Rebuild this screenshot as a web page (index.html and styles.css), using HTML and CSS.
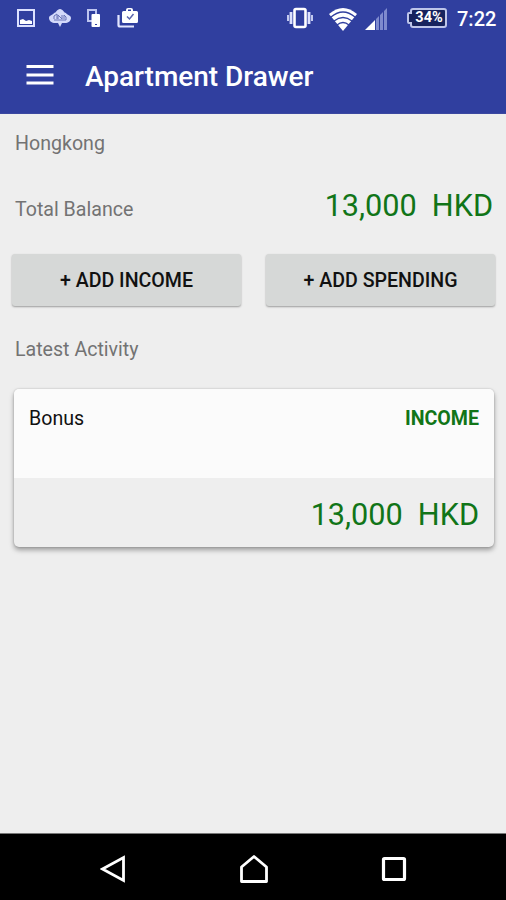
FILE: index.html
```html
<!DOCTYPE html>
<html lang="en">
<head>
<meta charset="utf-8">
<meta name="viewport" content="width=device-width, initial-scale=1">
<title>Apartment Drawer</title>
<link rel="stylesheet" href="styles.css">
</head>
<body>
<div class="app">
  <header class="header">
    <div class="status-bar">
      <div class="notifications">
        <svg width="18" height="18" viewBox="0 0 18 18"><path d="M1 1h16v16H1z" fill="none" stroke="#dce1ff" stroke-width="2"/><path d="M3 11l3-1 3 2 3-1 3 1v3H3z" fill="#fff"/></svg>
        <svg width="22" height="18" viewBox="0 0 22 18"><path d="M5 4c2 0 3-4 6-4s4 4 6 4c1 2 5 2 5 5s-3 5-6 5h-3l-2 4-2-4H6c-3 0-6-2-6-5s4-3 5-5z" fill="#d3d9fa"/><path d="M5 10V7l3-2v5m1 0V6l4 4V6m2 4V6l2 2v3M5 11h12" fill="none" stroke="#6873b6" stroke-width="1"/></svg>
        <svg width="13" height="18" viewBox="0 0 13 18"><path d="M1 1h8v11H1z" fill="none" stroke="#bdc5f0" stroke-width="2"/><rect x="4.500" y="5" width="8.500" height="13" rx="1" fill="#fff"/><path d="M8 15.500h2" stroke="#303f9f"/></svg>
        <svg width="22" height="20" viewBox="0 0 22 20"><path d="M1.500 7v10q0 1.500 1.500 1.500h14" fill="none" stroke="#e2e6ff" stroke-width="2.200"/><path d="M9 3V2q0-2 2-2h3q2 0 2 2v1h3.500Q21 3 21 4.500v9q0 1.500-1.500 1.500h-13Q5 15 5 13.500v-9Q5 3 6.500 3zm2 0h3V1.500h-3z" fill="#fff"/><path d="M10 8.500l2.500 2.500 4-5" fill="none" stroke="#5965ad" stroke-width="1.500"/></svg>
      </div>
      <div class="system">
        <svg width="28" height="22" viewBox="0 0 28 22"><rect x="8.500" y="2" width="11" height="18" rx="1.500" fill="none" stroke="#fff" stroke-width="2.600"/><path d="M5 5v12M23 5v12" stroke="#dce1ff" stroke-width="2.800"/><path d="M2 8v6M26 8v6" stroke="#c3caef" stroke-width="2"/></svg>
        <svg class="wifi" width="28" height="23" viewBox="0 0 28 23"><path d="M0 6Q14-6 28 6L14 23z" fill="#fff"/><path d="M2 9Q14-1 26 9M5 13q9-7 18 0M8 17q6-5 12 0" fill="none" stroke="#303f9f" stroke-width="1.300"/></svg>
        <svg class="signal" width="22" height="22" viewBox="0 0 22 22"><path d="M0 22l4-4v4zM4 22v-4l6-6v10z" fill="#fff"/><path d="M11 22V11l3-3v14zM15 22V7l3-3v18zM19 22V3l3-3v22z" fill="#7f8bce"/></svg>
        <div class="battery"><svg width="40" height="20" viewBox="0 0 40 20"><path d="M6 1h31q2 0 2 2v14q0 2-2 2H6q-2 0-2-2v-2H2q-1 0-1-1V6q0-1 1-1h2V3q0-2 2-2z" fill="#17235e" stroke="#bdc5e9" stroke-width="2"/></svg><span>34%</span></div>
        <time>7:22</time>
      </div>
    </div>
    <div class="toolbar">
      <svg width="28" height="20" viewBox="0 0 28 20"><path d="M.5 1.500h27M.5 10h27M.5 18h27" stroke="#fff" stroke-width="3"/></svg>
      <h1>Apartment Drawer</h1>
    </div>
  </header>
  <main>
    <div class="label place"><span>Hongkong</span></div>
    <div class="balance"><span class="label total">Total Balance</span><span class="amount">13,000&nbsp; HKD</span></div>
    <div class="actions">
      <button type="button">+ ADD INCOME</button>
      <button type="button" class="spending">+ ADD SPENDING</button>
    </div>
    <h2 class="label latest"><span>Latest Activity</span></h2>
    <article class="card">
      <div class="card-top"><span class="name">Bonus</span><strong>INCOME</strong></div>
      <div class="card-bottom"><span class="amount">13,000&nbsp; HKD</span></div>
    </article>
  </main>
  <nav class="nav">
    <svg width="26" height="28" viewBox="0 0 26 28"><path d="M23.500 2.500v23L2.500 14z" fill="none" stroke="#fff" stroke-width="2.800"/></svg>
    <svg width="30" height="30" viewBox="0 0 30 30"><path d="M2.500 27.500V13L15 2.500 27.500 13v14.500z" fill="none" stroke="#fff" stroke-width="2.800" stroke-linejoin="round"/></svg>
    <svg width="26" height="26" viewBox="0 0 26 26"><rect x="2.500" y="2.500" width="21" height="21" rx="1" fill="none" stroke="#fff" stroke-width="3.200"/></svg>
  </nav>
</div>
</body>
</html>
```
FILE: styles.css
```css
* { box-sizing: border-box; }
body { margin: 0; font-family: Roboto, "Liberation Sans", sans-serif; background: #eee; }
svg { display: block; flex: none; }
.app { width: 506px; height: 900px; display: flex; flex-direction: column; overflow: hidden; }
.header { height: 114px; background: #303f9f; color: #fff; border-bottom: 1px solid #3b48a0; flex: none; }
.status-bar { height: 37px; padding: 0 10px 0 17px; display: flex; justify-content: space-between; align-items: center; }
.notifications { display: flex; align-items: center; gap: 15px; margin-top: -1px; }
.notifications svg:nth-child(2) { margin-left: -1px; }
.notifications svg:nth-child(3) { margin-left: 1px; }
.notifications svg:nth-child(4) { margin-left: 2px; }
.system { display: flex; align-items: center; }
.system > svg:first-child { margin-top: -1px; }
.wifi { margin-left: 15px; margin-top: 1px; }
.signal { margin-left: 8px; margin-top: 1px; }
.battery { display: grid; margin-left: 20px; margin-top: -1px; }
.battery > * { grid-area: 1 / 1; }
.battery span { font-size: 14.5px; font-weight: 700; line-height: 20px; padding-left: 4px; text-align: center; }
time { width: 39px; margin-left: 10px; font-size: 20px; font-weight: 500; white-space: nowrap; }
.toolbar { height: 77px; padding: 0 26px; display: flex; align-items: center; gap: 31px; }
.toolbar svg { margin-top: -2px; }
h1 { margin: 3px 0 0; font-size: 28px; line-height: 34px; font-weight: 500; letter-spacing: -.03px; white-space: nowrap; }
main { flex: 1; min-height: 0; padding: 0 11px 0 12px; }
.label { color: #737373; font-size: 19.6px; font-weight: 400; line-height: 24px; }
.place { padding: 18px 3px 0; }
.balance { display: flex; justify-content: space-between; align-items: baseline; padding: 30px 2px 0 3px; }
.amount { color: #117518; font-size: 30.7px; line-height: 40px; letter-spacing: -.04px; white-space: pre; }
.actions { display: grid; grid-template-columns: 229px 229px; gap: 25px; margin-top: 28px; }
button { height: 52px; border: 0; border-radius: 3px; background: #d6d8d7; color: #111; font: 500 19.6px/53px Roboto, sans-serif; padding: 0; box-shadow: 0 1px 2px rgba(0,0,0,.35); }
.latest { margin: 32px 3px 27px; }
.card { margin: 0 1px 0 2px; height: 158px; border-radius: 5px; overflow: hidden; background: #eee; box-shadow: 0 3px 5px rgba(0,0,0,.35), 0 0 2px rgba(0,0,0,.2); }
.card-top { height: 89px; padding: 18px 15px 16px; background: #fbfbfb; display: flex; justify-content: space-between; font-size: 19.6px; line-height: 24px; color: #111; }
strong { color: #117518; font-weight: 700; }
.card-bottom { padding: 17px 15px 0; text-align: right; }
.nav { height: 67px; flex: none; border-top: 1px solid #777; background: #000; display: flex; justify-content: space-between; align-items: center; padding: 4px 99px 0 100px; }
```
